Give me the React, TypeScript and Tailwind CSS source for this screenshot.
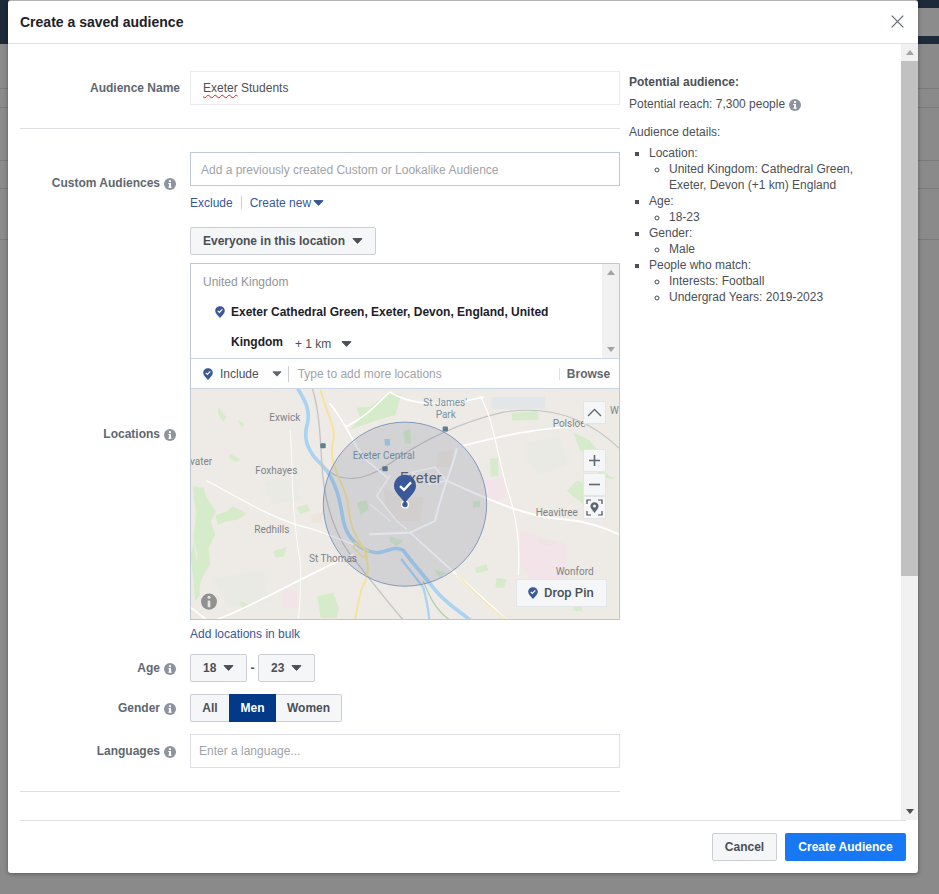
import React from "react";

const Info = ({ className = "" }: { className?: string }) => (
  <svg width="12" height="12" viewBox="0 0 12 12" className={className}>
    <circle cx="6" cy="6" r="6" fill="#8d949e" />
    <rect x="5" y="5" width="2" height="4.6" fill="#fff" />
    <rect x="4.3" y="8.6" width="3.4" height="1" fill="#fff" />
    <rect x="4.3" y="5" width="1.5" height="1" fill="#fff" />
    <circle cx="6" cy="3.2" r="1.1" fill="#fff" />
  </svg>
);

const Caret = ({ color = "#4b4f56", w = 11 }: { color?: string; w?: number }) => (
  <svg width={w} height="6" viewBox="0 0 11 6" className="shrink-0">
    <path d="M1 0.6 H10 L5.5 5.4 Z" fill={color} stroke={color} strokeWidth="1" strokeLinejoin="round" />
  </svg>
);

const Pin = ({ size = 12 }: { size?: number }) => (
  <svg width={(size * 10) / 12} height={size} viewBox="0 0 10 12" className="shrink-0">
    <path d="M5 0.2 C7.7 0.2 9.8 2.2 9.8 4.8 C9.8 7.4 7 9.8 5 11.9 C3 9.8 0.2 7.4 0.2 4.8 C0.2 2.2 2.3 0.2 5 0.2 Z" fill="#3b5998" />
    <path d="M2.8 4.9 L4.4 6.4 L7.3 3.4" fill="none" stroke="#fff" strokeWidth="1.3" />
  </svg>
);

const Label = ({ text, info = true }: { text: string; info?: boolean }) => (
  <div className={`w-[160px] shrink-0 flex items-center justify-end gap-1 text-[12px] font-bold text-[#606770] ${info ? "pr-1" : ""}`}>
    <span>{text}</span>
    {info && <Info className="mt-[2px] shrink-0" />}
  </div>
);

const Btn = ({ children, className = "" }: { children: React.ReactNode; className?: string }) => (
  <div className={`h-[28px] flex items-center bg-[#f5f6f7] border border-[#ccd0d5] rounded-[2px] text-[12px] font-bold text-[#4b4f56] ${className}`}>
    {children}
  </div>
);

const greens = [
  "M8 296 L40 300 L50 330 L78 372 L62 400 L76 440 L56 480 L60 530 L34 575 L26 610 L14 560 L22 500 L10 450 L18 380 Z",
  "M76 382 L110 372 L128 356 L170 378 L146 396 L108 402 L84 412 Z",
  "M500 62 L540 60 L600 16 L634 22 L616 84 L566 98 L480 128 L510 92 Z",
  "M900 214 L924 212 L926 264 L902 268 Z",
  "M965 78 L1044 72 L1046 98 L966 100 Z",
  "M848 342 L870 340 L870 358 L850 360 Z",
  "M382 626 L430 614 L446 660 L440 690 L392 690 Z",
  "M640 130 L660 126 L664 170 L644 168 Z",
  "M120 200 L150 214 L140 224 L118 212 Z",
  "M145 100 L165 110 L155 120 Z",
  "M85 60 L108 90 L100 104 L84 80 Z",
  "M320 360 L350 350 L360 370 L330 380 Z",
  "M250 490 L290 478 L282 506 L256 510 Z",
  "M920 570 L950 574 L942 600 L916 600 Z",
  "M855 540 L890 530 L895 548 L860 556 Z",
  "M1045 455 L1100 460 L1090 474 L1050 470 Z",
  "M1160 280 L1200 290 L1205 330 L1180 350 L1130 310 Z",
  "M1215 220 L1250 260 L1275 275 L1230 270 Z",
  "M1150 135 L1200 160 L1230 200 L1170 190 Z",
  "M500 345 L530 338 L536 366 L512 384 Z",
  "M600 445 L640 460 L620 475 L598 462 Z",
  "M730 545 L770 555 L750 570 Z",
  "M1150 640 L1180 636 L1175 670 L1150 668 Z",
  "M150 640 L175 650 L160 668 Z",
  "M12 460 L2 500 L16 640 L30 620 Z",
];

const MapArt = () => (
  <svg viewBox="3 6 1284 687" className="block w-full h-full" preserveAspectRatio="none">
    <rect x="0" y="0" width="1290" height="705" fill="#eeebe6" />
    <g fill="#e8eae2" opacity="0.7">
      <path d="M1010 165 L1110 150 L1135 230 L1050 262 L1010 220 Z" />
      <path d="M220 280 L320 275 L330 340 L240 350 Z" />
      <path d="M70 570 L220 550 L240 640 L120 660 Z" />
    </g>
    <g fill="#d5ebca">
      {greens.map((d) => (
        <path key={d} d={d} />
      ))}
    </g>
    <g fill="#f2e3e8" opacity="0.85">
      <path d="M990 430 L1130 470 L1130 590 L1040 600 L990 530 Z" />
      <path d="M880 280 L940 270 L950 330 L900 350 Z" />
      <path d="M275 600 L320 610 L320 660 L280 660 Z" />
    </g>
    <g fill="#e6dccb" opacity="0.35">
      <path d="M580 300 L640 330 L700 330 L690 400 L620 400 L590 360 Z" />
      <path d="M745 195 L790 190 L780 240 L740 240 Z" />
      <path d="M365 380 L400 375 L395 405 L365 405 Z" />
    </g>
    <rect x="905" y="30" width="160" height="35" fill="#e2e6e8" />
    <g fill="none" stroke="#a9d3f2" strokeLinecap="round" strokeLinejoin="round">
      <path d="M325 8 C345 40 362 70 352 110 C335 165 365 205 395 232 C440 280 450 340 460 400 C470 450 510 490 560 495 C590 495 610 472 640 488 C670 530 700 560 730 600 C770 650 810 670 840 696" strokeWidth="11" />
      <path d="M635 515 C660 550 680 570 700 600 C712 640 715 670 718 696" strokeWidth="7" />
    </g>
    <path d="M700 580 C720 630 740 670 780 696" fill="none" stroke="#b4cfae" strokeWidth="4" />
    <g fill="none" stroke="#c4c4c4" strokeLinecap="round">
      <path d="M368 8 C385 60 390 130 395 220 C400 330 430 430 480 500 C530 560 590 640 640 696" strokeWidth="4" />
      <path d="M405 240 C450 290 520 280 590 235 C680 170 790 110 940 75 C1040 60 1170 70 1286 182" strokeWidth="3.5" />
    </g>
    <g fill="none" stroke="#fff" strokeLinecap="round" strokeLinejoin="round">
      <path d="M420 50 C470 110 490 170 520 210 L590 270" strokeWidth="5" />
      <path d="M470 118 C540 80 560 50 600 15 C640 40 720 70 880 30" strokeWidth="4.5" />
      <path d="M870 28 C905 80 915 170 950 300 C985 400 990 480 985 560" strokeWidth="3.5" />
      <path d="M820 175 C960 140 1040 125 1180 115" strokeWidth="5" />
      <path d="M770 280 C880 330 1010 390 1120 395 C1190 400 1240 420 1287 440" strokeWidth="6" />
      <path d="M800 185 C790 240 760 290 735 400 L660 435 L540 440" strokeWidth="6" />
      <path d="M665 255 L735 240 L770 280 L720 290 Z" strokeWidth="4" />
      <path d="M50 280 C130 320 250 400 370 425 L490 470" strokeWidth="3.5" />
      <path d="M300 130 C310 220 300 340 330 520 C335 580 330 640 325 696" strokeWidth="2.5" />
      <path d="M80 695 C200 650 330 570 490 500" strokeWidth="5" />
      <path d="M660 435 C720 490 810 570 950 696" strokeWidth="6" />
      <path d="M600 265 L560 325 L620 400 L650 425" strokeWidth="4" />
      <path d="M540 350 L600 400" strokeWidth="3" />
      <path d="M3 660 C20 670 35 685 50 696" strokeWidth="5" />
    </g>
    <path d="M392 8 C405 70 440 120 430 160 C410 230 460 280 472 340 C480 410 490 440 520 480 C540 520 535 570 520 590 C505 630 500 670 495 696" fill="none" stroke="#f5e39a" strokeWidth="6" strokeLinejoin="round" />
    <path d="M495 465 L535 490 L520 510 L490 480 Z" fill="none" stroke="#f5e39a" strokeWidth="5" />
    <path d="M800 560 C850 610 900 660 950 696" fill="none" stroke="#f5e39a" strokeWidth="3" />
    <path d="M583 155 L600 155 L600 175 L585 175 Z" fill="#a9d3f2" />
    <g fill="#5d7f92">
      <rect x="391" y="168" width="16" height="15" rx="3" />
      <rect x="758" y="118" width="16" height="15" rx="3" />
      <rect x="577" y="237" width="16" height="15" rx="3" />
    </g>
    <g fontFamily="Roboto, sans-serif" fontSize="30" fill="#7f8387">
      <text x="238" y="101">Exwick</text>
      <text x="0" y="232">vater</text>
      <text x="196" y="260">Foxhayes</text>
      <text x="193" y="437">Redhills</text>
      <text x="357" y="523">St Thomas</text>
      <text x="1088" y="119">Polsloe</text>
      <text x="1037" y="386">Heavitree</text>
      <text x="1097" y="563">Wonford</text>
      <text x="1260" y="81">W</text>
      <text x="700" y="58" fill="#7793a6">St James'</text>
      <text x="737" y="93" fill="#7793a6">Park</text>
      <text x="488" y="214" fill="#7793a6">Exeter Central</text>
    </g>
    <text x="630" y="287" fontFamily="Roboto, sans-serif" fontSize="45" fill="#5d6270">Exeter</text>
    <circle cx="645" cy="350" r="245" fill="#3b4a7a" fillOpacity="0.15" stroke="#7089b7" strokeWidth="2.5" />
    <circle cx="645" cy="351" r="12" fill="#fff" />
    <circle cx="645" cy="351" r="8" fill="#3b5998" />
    <path d="M645 262 C665 262 678 278 678 296 C678 316 655 330 645 348 C635 330 612 316 612 296 C612 278 625 262 645 262 Z" fill="#3b5998" />
    <path d="M630 296 L642 307 L663 285" fill="none" stroke="#fff" strokeWidth="7" />
    <circle cx="57" cy="641" r="24" fill="#8f9291" />
    <rect x="53" y="638" width="8" height="20" fill="#e4e4e4" />
    <circle cx="57" cy="628" r="4.5" fill="#e4e4e4" />
  </svg>
);

const MapBtn = ({ children, className = "" }: { children: React.ReactNode; className?: string }) => (
  <div className={`w-[23px] h-[23px] flex items-center justify-center bg-[#f5f6f7] border border-[#e3e5e8] rounded-[1px] ${className}`}>{children}</div>
);

export default function App() {
  return (
    <div className="relative w-[939px] h-[894px] overflow-hidden bg-[#8a8a8a] font-['Liberation_Sans',Arial,sans-serif]">
      <div className="flex h-[44px]">
        <div className="flex-1 bg-[#1c2a39]" />
        <div className="w-[21px] flex flex-col">
          <div className="h-[8px] bg-[#1c2a39]" />
          <div className="flex-1 bg-[#8c8c8c]" />
          <div className="h-[8px] bg-[#1c2a39]" />
        </div>
      </div>
      <div className="h-[45px] border-b border-[#7a7a7a]" />
      <div className="h-[19px] border-b border-[#7a7a7a]" />
      <div className="h-[53px] border-b border-[#7a7a7a]" />
      <div className="h-[28px] border-b border-[#7a7a7a]" />
      <div className="h-[51px] border-b border-[#7a7a7a]" />

      <div className="absolute left-[8px] top-0 w-[910px] h-[873px] bg-white border-t border-[#b4b4b4] rounded-[3px] shadow-[0_1px_4px_rgba(0,0,0,0.35)] flex flex-col overflow-hidden">
        <div className="h-[43px] shrink-0 flex items-center justify-between border-b border-[#dddfe2] pl-3 pr-[14px]">
          <div className="text-[14px] font-bold text-[#1d2129]">Create a saved audience</div>
          <svg width="13" height="13" viewBox="0 0 13 13" className="mb-[2px]">
            <path d="M0.7 0.7 L12.3 12.3 M12.3 0.7 L0.7 12.3" stroke="#606770" strokeWidth="1.2" fill="none" />
          </svg>
        </div>

        <div className="flex-1 min-h-0 flex overflow-hidden">
          <div className="w-[893px] flex">
            <div className="w-[600px] ml-3 shrink-0 pt-[27px]">
              <div className="flex">
                <Label text="Audience Name" info={false} />
                <div className="ml-[10px] w-[430px] h-[34px] flex items-center border border-[#e9ebee] pl-3 text-[12px] text-[#4b4f56]">
                  <span className="underline decoration-wavy decoration-[#e02020] decoration-1 underline-offset-2">Exeter</span>
                  <span>&nbsp;Students</span>
                </div>
              </div>
              <div className="mt-[23px] h-px bg-[#dddfe2]" />

              <div className="mt-[23px] flex h-[62px]">
                <Label text="Custom Audiences" />
                <div className="ml-[10px] w-[430px]">
                  <div className="h-[34px] flex items-center border border-[#bdc7d8] pl-[10px] pt-px text-[12px] text-[#a0a3a8]">
                    Add a previously created Custom or Lookalike Audience
                  </div>
                  <div className="mt-[7px] flex items-center text-[12px] text-[#365899]">
                    <span>Exclude</span>
                    <span className="ml-2 mr-2 w-px h-[13px] bg-[#ccd0d5]" />
                    <span className="mt-px">Create new</span>
                    <span className="ml-[2px] mt-px"><Caret color="#365899" /></span>
                  </div>
                </div>
              </div>

              <div className="mt-[13px] flex">
                <Label text="Locations" />
                <div className="ml-[10px] w-[430px]">
                  <Btn className="w-[186px] pl-3 gap-[7px]">
                    <span>Everyone in this location</span>
                    <Caret />
                  </Btn>
                  <div className="mt-2 border border-[#bdc7d8] h-[357px] flex flex-col">
                    <div className="h-[94px] flex shrink-0">
                      <div className="flex-1 pl-3 text-[12px]">
                        <div className="pt-[9px] h-[32px] text-[#90949c]">United Kingdom</div>
                        <div className="flex pl-3 h-[30px] items-center gap-[6px] pt-px">
                          <Pin />
                          <span className="font-bold text-[#1d2129] whitespace-nowrap">Exeter Cathedral Green, Exeter, Devon, England, United</span>
                        </div>
                        <div className="flex pl-[28px] h-[30px] items-center pt-[2px]">
                          <span className="font-bold text-[#1d2129]">Kingdom</span>
                          <span className="ml-3 mt-[3px] text-[#4b4f56]">+ 1 km</span>
                          <span className="ml-[10px] mt-[3px]"><Caret /></span>
                        </div>
                      </div>
                      <div className="w-[17px] bg-[#f1f1f1] flex flex-col items-center justify-between py-[6px]">
                        <svg width="8" height="5" viewBox="0 0 8 5"><path d="M4 0 L8 5 H0 Z" fill="#a3a3a3" /></svg>
                        <svg width="8" height="5" viewBox="0 0 8 5"><path d="M0 0 H8 L4 5 Z" fill="#a3a3a3" /></svg>
                      </div>
                    </div>
                    <div className="h-[31px] shrink-0 border-t border-b border-[#ccd6e4] flex items-center pl-3 text-[12px]">
                      <Pin />
                      <span className="ml-[7px] text-[#4b4f56]">Include</span>
                      <span className="ml-[13px]"><Caret color="#606770" w={10} /></span>
                      <span className="ml-[6px] w-px h-[16px] bg-[#ccd0d5]" />
                      <span className="ml-[9px] text-[#a0a3a8]">Type to add more locations</span>
                      <span className="ml-[117px] w-px h-[12px] bg-[#dddfe2]" />
                      <span className="ml-[7px] font-bold text-[#606770]">Browse</span>
                    </div>
                    <div className="relative flex-1 min-h-0 overflow-hidden">
                      <MapArt />
                      <MapBtn className="absolute left-[392px] top-[12px]">
                        <svg width="15" height="9" viewBox="0 0 15 9"><path d="M1 8 L7.5 1.5 L14 8" fill="none" stroke="#606770" strokeWidth="1.4" /></svg>
                      </MapBtn>
                      <div className="absolute left-[392px] top-[60px] flex flex-col">
                        <MapBtn>
                          <svg width="13" height="13" viewBox="0 0 13 13"><path d="M6.5 1 V12 M1 6.5 H12" stroke="#606770" strokeWidth="1.6" /></svg>
                        </MapBtn>
                        <MapBtn className="mt-px">
                          <svg width="13" height="13" viewBox="0 0 13 13"><path d="M1 6.5 H12" stroke="#606770" strokeWidth="1.6" /></svg>
                        </MapBtn>
                        <MapBtn>
                          <svg width="17" height="17" viewBox="0 0 17 17">
                            <path d="M1 5 V1 H5 M12 1 H16 V5 M16 12 V16 H12 M5 16 H1 V12" fill="none" stroke="#4b4f56" strokeWidth="1.2" />
                            <path d="M8.5 3.2 C10.9 3.2 12.6 5 12.6 7.1 C12.6 9.4 10 11.6 8.5 14 C7 11.6 4.4 9.4 4.4 7.1 C4.4 5 6.1 3.2 8.5 3.2 Z" fill="#606770" />
                            <circle cx="8.5" cy="7.1" r="1.5" fill="#f5f6f7" />
                          </svg>
                        </MapBtn>
                      </div>
                      <div className="absolute left-[325px] top-[190px] w-[91px] h-[28px] flex items-center pl-[11px] gap-[6px] bg-[#f5f6f7] border border-[#e3e5e8] rounded-[2px] text-[13px] font-medium font-['Roboto',sans-serif] text-[#4b4f56]">
                        <Pin />
                        <span>Drop Pin</span>
                      </div>
                    </div>
                  </div>
                  <div className="mt-[7px] h-[14px] flex items-center text-[12px] text-[#365899]">Add locations in bulk</div>
                </div>
              </div>

              <div className="mt-[13px] flex">
                <Label text="Age" />
                <div className="ml-[10px] flex items-center">
                  <Btn className="w-[57px] pl-[12px] gap-[7px]"><span>18</span><Caret /></Btn>
                  <span className="w-[11px] text-center text-[12px] font-bold text-[#4b4f56]">-</span>
                  <Btn className="w-[57px] pl-[12px] gap-[7px]"><span>23</span><Caret /></Btn>
                </div>
              </div>

              <div className="mt-[12px] flex">
                <Label text="Gender" />
                <div className="ml-[10px] flex text-[12px] font-bold">
                  <div className="w-[39px] h-[28px] flex items-center justify-center bg-[#f5f6f7] border border-[#ccd0d5] border-r-0 rounded-l-[2px] text-[#4b4f56]">All</div>
                  <div className="w-[47px] h-[28px] flex items-center justify-center bg-[#023a88] text-white">Men</div>
                  <div className="w-[66px] h-[28px] flex items-center justify-center bg-[#f5f6f7] border border-[#ccd0d5] border-l-0 rounded-r-[2px] text-[#4b4f56]">Women</div>
                </div>
              </div>

              <div className="mt-[12px] flex">
                <Label text="Languages" />
                <div className="ml-[10px] w-[430px] h-[34px] flex items-center border border-[#dddfe2] pl-2 text-[12px] text-[#a0a3a8]">Enter a language...</div>
              </div>
              <div className="mt-[23px] h-px bg-[#dddfe2]" />
            </div>

            <div className="ml-[9px] flex-1 pt-[30px] text-[12px] leading-4 text-[#4b4f56]">
              <div className="font-bold">Potential audience:</div>
              <div className="mt-[6px] flex items-center gap-[4px]">
                <span>Potential reach: 7,300 people</span>
                <Info className="mt-[2px]" />
              </div>
              <div className="mt-3">Audience details:</div>
              <ul className="mt-[5px] list-[square] pl-5">
                <li>
                  Location:
                  <ul className="list-[circle] pl-5">
                    <li className="w-[200px]">United Kingdom: Cathedral Green, Exeter, Devon (+1 km) England</li>
                  </ul>
                </li>
                <li>
                  Age:
                  <ul className="list-[circle] pl-5"><li>18-23</li></ul>
                </li>
                <li>
                  Gender:
                  <ul className="list-[circle] pl-5"><li>Male</li></ul>
                </li>
                <li>
                  People who match:
                  <ul className="list-[circle] pl-5">
                    <li>Interests: Football</li>
                    <li>Undergrad Years: 2019-2023</li>
                  </ul>
                </li>
              </ul>
            </div>
          </div>

          <div className="w-[17px] shrink-0 bg-[#f1f1f1] flex flex-col items-center">
            <div className="h-[17px] flex items-center justify-center">
              <svg width="8" height="5" viewBox="0 0 8 5"><path d="M4 0 L8 5 H0 Z" fill="#a3a3a3" /></svg>
            </div>
            <div className="w-full h-[515px] bg-[#c1c1c1]" />
            <div className="flex-1" />
            <div className="h-[17px] flex items-center justify-center">
              <svg width="8" height="5" viewBox="0 0 8 5"><path d="M0 0 H8 L4 5 Z" fill="#505050" /></svg>
            </div>
          </div>
        </div>

        <div className="h-[53px] shrink-0 mx-3 border-t border-[#dddfe2] flex items-center justify-end gap-2">
          <div className="w-[65px] h-[28px] flex items-center justify-center bg-[#f5f6f7] border border-[#ccd0d5] rounded-[2px] text-[12px] font-bold text-[#4b4f56]">Cancel</div>
          <div className="w-[121px] h-[28px] flex items-center justify-center bg-[#1877f2] rounded-[2px] text-[12px] font-bold text-white">Create Audience</div>
        </div>
      </div>
    </div>
  );
}
